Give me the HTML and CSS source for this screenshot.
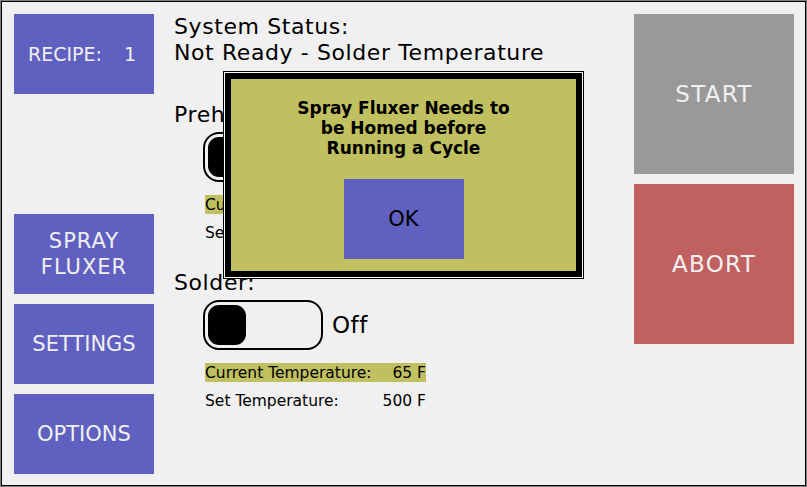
FILE: index.html
```html
<!DOCTYPE html>
<html>
<head>
<meta charset="utf-8">
<link rel="stylesheet" href="styles.css">
</head>
<body>
<div class="screen">
  <div class="inner">
    <div class="leftcol">
      <div class="btn blue recipe"><span>RECIPE:</span><span class="num">1</span></div>
      <div class="leftgroup">
        <div class="btn blue spray">SPRAY<br>FLUXER</div>
        <div class="btn blue">SETTINGS</div>
        <div class="btn blue">OPTIONS</div>
      </div>
    </div>
    <div class="main">
      <div class="status">System Status:<br>Not Ready - Solder Temperature</div>
      <div class="section first">
        <div class="label">Preheat:</div>
        <div class="togglerow">
          <div class="toggle"><div class="knob"></div></div>
          <span class="state">Off</span>
        </div>
        <div class="temp current"><span>Current Temperature:</span><span>65 F</span></div>
        <div class="temp"><span>Set Temperature:</span><span>200 F</span></div>
      </div>
      <div class="section">
        <div class="label">Solder:</div>
        <div class="togglerow">
          <div class="toggle"><div class="knob"></div></div>
          <span class="state">Off</span>
        </div>
        <div class="temp current"><span>Current Temperature:</span><span>65 F</span></div>
        <div class="temp"><span>Set Temperature:</span><span>500 F</span></div>
      </div>
    </div>
    <div class="rightcol">
      <div class="btn big gray">START</div>
      <div class="btn big red">ABORT</div>
    </div>
    <div class="dialog">
      <div class="dialog-body">
        <div class="msg">Spray Fluxer Needs to<br>be Homed before<br>Running a Cycle</div>
        <div class="ok">OK</div>
      </div>
    </div>
  </div>
</div>
</body>
</html>
```
FILE: styles.css
```css
html, body {
  margin: 0;
  padding: 0;
  background: #f0f0f0;
}
.screen {
  width: 807px;
  height: 487px;
  box-sizing: border-box;
  border: 1px solid #808080;
  font-family: "DejaVu Sans", sans-serif;
}
.inner {
  position: relative;
  height: 100%;
  box-sizing: border-box;
  border: 1px solid #000;
  background: #f0f0f0;
  padding: 12px 11px 11px 12px;
  display: flex;
}
.leftcol {
  width: 140px;
  display: flex;
  flex-direction: column;
  justify-content: space-between;
}
.leftgroup {
  display: flex;
  flex-direction: column;
  gap: 10px;
}
.btn {
  display: flex;
  align-items: center;
  justify-content: center;
  text-align: center;
  color: #f0f0f0;
}
.blue {
  background: #6060c0;
  width: 140px;
  height: 80px;
  font-size: 21px;
  line-height: 26px;
}
.spray {
  letter-spacing: 1px;
}
.recipe {
  justify-content: flex-start;
  padding-left: 14px;
  box-sizing: border-box;
  font-size: 19px;
}
.recipe .num {
  margin-left: 22px;
}
.main {
  margin-left: 20px;
  flex: 1;
  color: #000;
}
.status {
  font-size: 22px;
  letter-spacing: 0.6px;
  line-height: 26px;
}
.section.first {
  margin-top: 36px;
}
.section {
  margin-top: 28px;
}
.label {
  font-size: 22px;
  letter-spacing: 0.6px;
  line-height: 26px;
}
.togglerow {
  display: flex;
  align-items: center;
  margin-top: 4px;
  margin-left: 29px;
}
.toggle {
  width: 120px;
  height: 50px;
  box-sizing: border-box;
  border: 2px solid #000;
  border-radius: 16px;
  background: #f0f0f0;
  padding: 3px;
}
.knob {
  width: 38px;
  height: 40px;
  background: #000;
  border-radius: 11px;
}
.state {
  font-size: 23px;
  letter-spacing: 0.5px;
  margin-left: 9px;
}
.temp {
  margin-left: 31px;
  width: 221px;
  height: 19px;
  display: flex;
  justify-content: space-between;
  align-items: center;
  font-size: 15.5px;
  margin-top: 9px;
}
.temp.current {
  background: #c0c060;
  margin-top: 13px;
}
.rightcol {
  width: 160px;
  margin-left: auto;
  display: flex;
  flex-direction: column;
  gap: 10px;
}
.big {
  width: 160px;
  height: 160px;
  font-size: 23px;
  letter-spacing: 1.3px;
}
.gray { background: #999999; }
.red { background: #c06060; }
.dialog {
  position: absolute;
  left: 221px;
  top: 69px;
  width: 361px;
  height: 208px;
  box-sizing: border-box;
  border: 1px solid #000;
  background: #fff;
  padding: 1px;
}
.dialog-body {
  height: 100%;
  box-sizing: border-box;
  border: 6px solid #000;
  background: #c0c060;
  display: flex;
  flex-direction: column;
  align-items: center;
}
.msg {
  margin-top: 19px;
  font-weight: bold;
  font-size: 17px;
  line-height: 20px;
  text-align: center;
  color: #000;
}
.ok {
  margin-top: 21px;
  width: 120px;
  height: 80px;
  background: #6060c0;
  display: flex;
  align-items: center;
  justify-content: center;
  font-size: 21px;
  color: #000;
}
```
